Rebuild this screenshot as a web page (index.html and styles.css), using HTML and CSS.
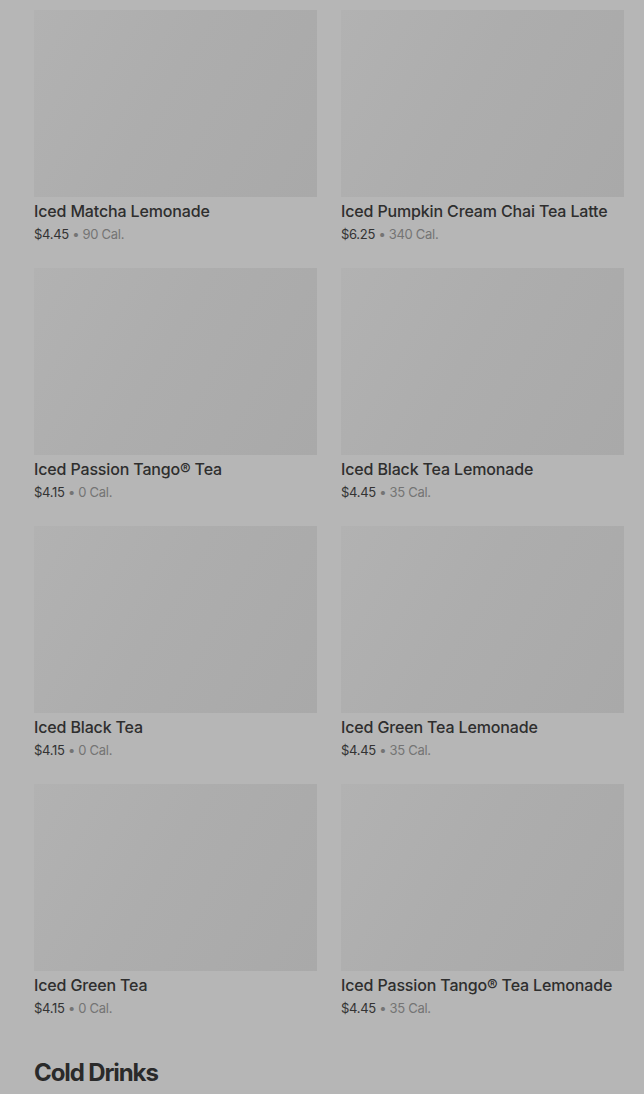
FILE: index.html
```html
<!DOCTYPE html>
<html lang="en">
<head>
    <meta charset="UTF-8">
    <meta name="viewport" content="width=device-width, initial-scale=1.0">
    <title>Menu - Iced Tea</title>
    <link rel="stylesheet" href="styles.css">
</head>
<body>

    <div class="menu">
        <div class="product-grid">
            <div class="product">
                <div class="product-img"></div>
                <h3 class="product-name">Iced Matcha Lemonade</h3>
                <p class="product-meta"><span class="price">$4.45</span> &bull; 90 Cal.</p>
            </div>
            <div class="product">
                <div class="product-img"></div>
                <h3 class="product-name">Iced Pumpkin Cream Chai Tea Latte</h3>
                <p class="product-meta"><span class="price">$6.25</span> &bull; 340 Cal.</p>
            </div>
            <div class="product">
                <div class="product-img"></div>
                <h3 class="product-name">Iced Passion Tango&reg; Tea</h3>
                <p class="product-meta"><span class="price">$4.15</span> &bull; 0 Cal.</p>
            </div>
            <div class="product">
                <div class="product-img"></div>
                <h3 class="product-name">Iced Black Tea Lemonade</h3>
                <p class="product-meta"><span class="price">$4.45</span> &bull; 35 Cal.</p>
            </div>
            <div class="product">
                <div class="product-img"></div>
                <h3 class="product-name">Iced Black Tea</h3>
                <p class="product-meta"><span class="price">$4.15</span> &bull; 0 Cal.</p>
            </div>
            <div class="product">
                <div class="product-img"></div>
                <h3 class="product-name">Iced Green Tea Lemonade</h3>
                <p class="product-meta"><span class="price">$4.45</span> &bull; 35 Cal.</p>
            </div>
            <div class="product">
                <div class="product-img"></div>
                <h3 class="product-name">Iced Green Tea</h3>
                <p class="product-meta"><span class="price">$4.15</span> &bull; 0 Cal.</p>
            </div>
            <div class="product">
                <div class="product-img"></div>
                <h3 class="product-name">Iced Passion Tango&reg; Tea Lemonade</h3>
                <p class="product-meta"><span class="price">$4.45</span> &bull; 35 Cal.</p>
            </div>
        </div>

        <h2 class="section-title">Cold Drinks</h2>
    </div>

</body>
</html>
```

FILE: styles.css
```css
* {
    box-sizing: border-box;
    margin: 0;
    padding: 0;
}

body {
    background: #b6b6b6;
    font-family: Inter, "Noto Sans", sans-serif;
    color: #2c2c2c;
    height: 1094px;
    overflow: hidden;
}

.menu {
    padding: 10px 20px 0 34px;
}

/* Product grid */
.product-grid {
    display: grid;
    grid-template-columns: 283px 283px;
    column-gap: 24px;
    row-gap: 22px;
}

.product-img {
    height: 187px;
    background: linear-gradient(120deg, #b2b2b2 0%, #adadad 45%, #a9a9a9 100%);
}

.product-name {
    margin-top: 3px;
    font-size: 16px;
    font-weight: 500;
    line-height: 22px;
    letter-spacing: -0.15px;
    color: #2e2e2e;
    white-space: nowrap;
}

.product-meta {
    font-size: 13px;
    line-height: 24px;
    letter-spacing: -0.3px;
    color: #747474;
}

.product-meta .price {
    color: #333;
}

/* Section heading */
.section-title {
    margin-top: 37px;
    font-size: 24px;
    font-weight: 700;
    line-height: 32px;
    letter-spacing: -1.1px;
    color: #2a2a2a;
}
```
